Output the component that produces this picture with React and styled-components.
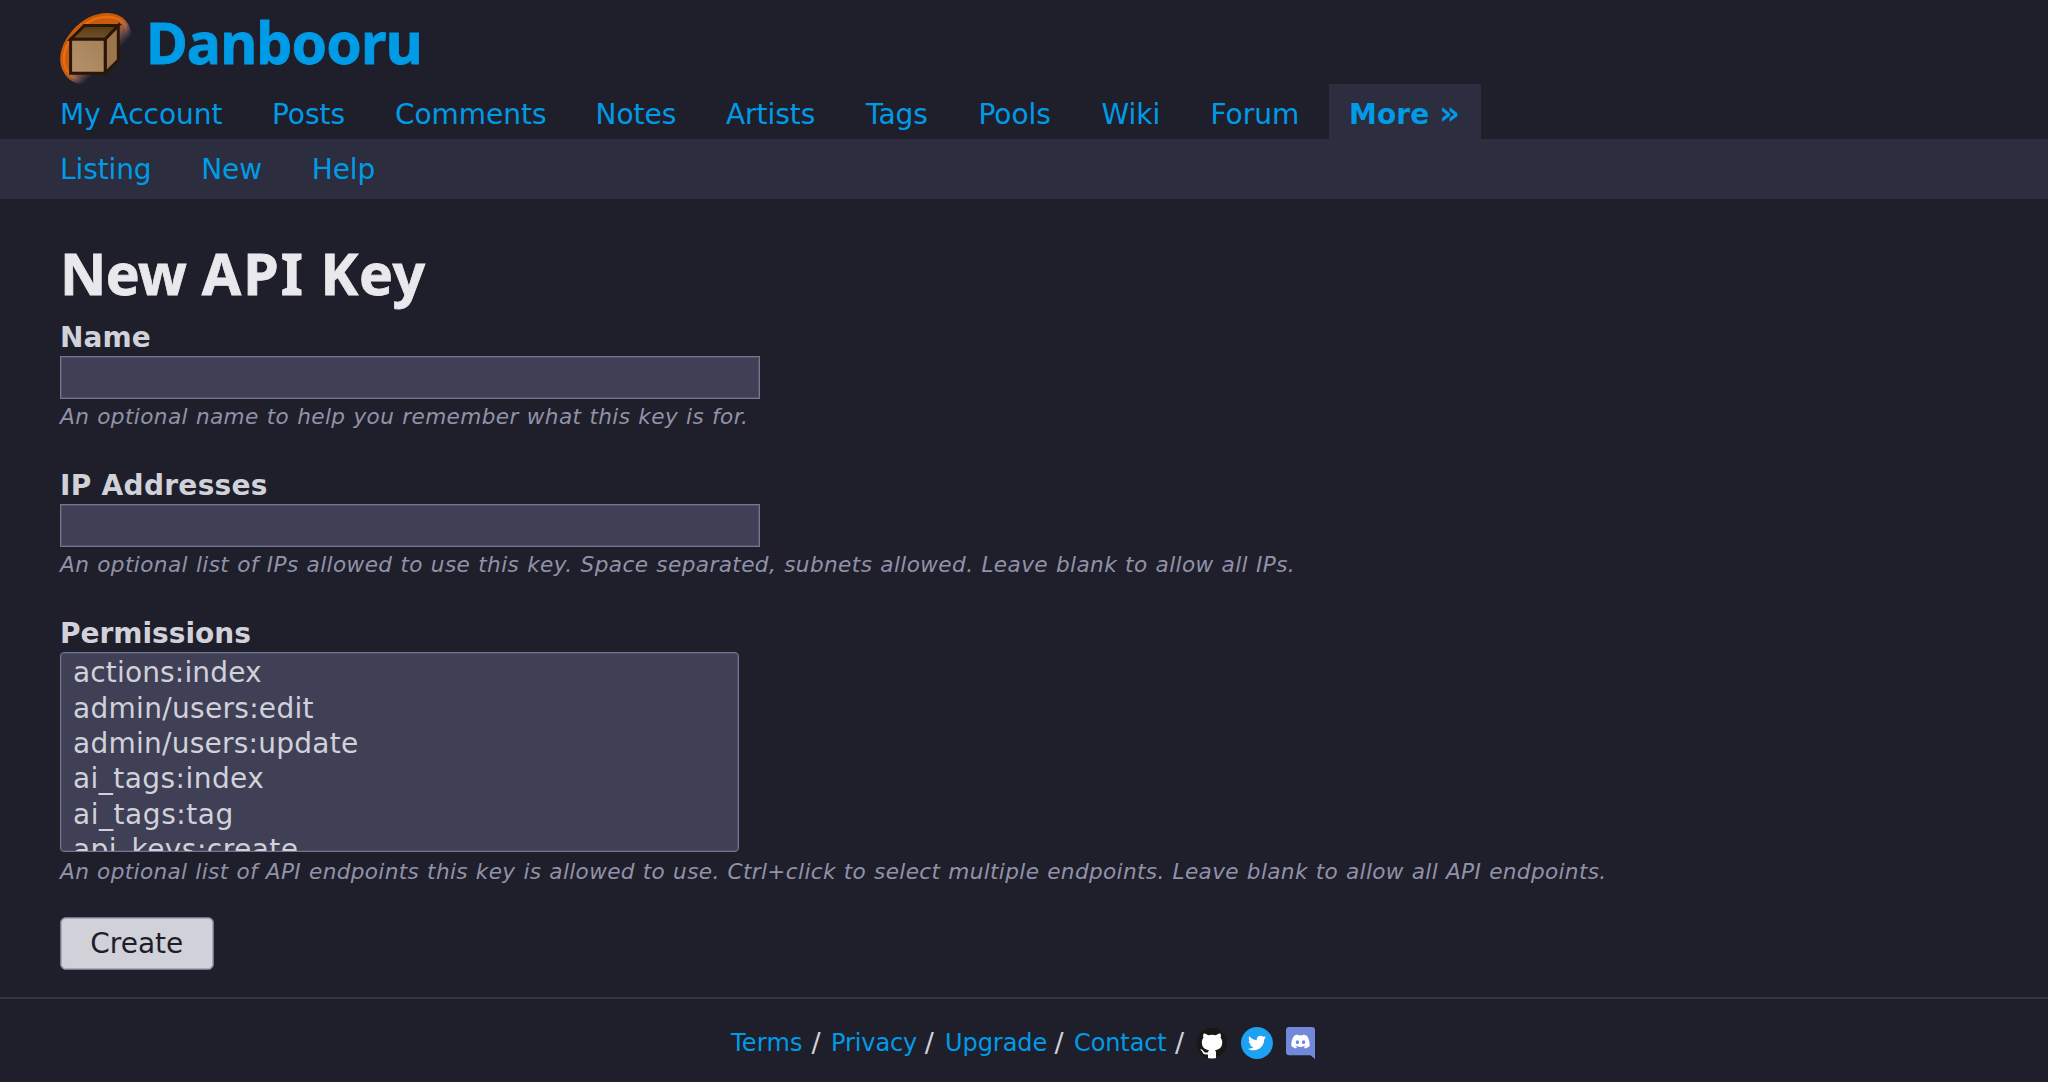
import React from "react";
import styled, { createGlobalStyle } from "styled-components";
import { FaTwitter, FaDiscord } from "react-icons/fa";

const GlobalStyle = createGlobalStyle`
  *, *::before, *::after { box-sizing: border-box; }
  html, body { margin: 0; padding: 0; background: #1f1f2c; }
  body {
    color: #d1d1da;
    font: 28px/36px Verdana, "DejaVu Sans", sans-serif;
    overflow: hidden;
  }
`;

const Page = styled.div`
  display: flex;
  flex-direction: column;
  height: 1082px;
`;

const Link = styled.a`
  color: #009be6;
  text-decoration: none;
  cursor: pointer;
`;

const Brand = styled(Link)`
  display: flex;
  height: 84px;
  padding: 13px 0 0 60px;
  gap: 14px;
`;

const BrandName = styled.span`
  margin-top: -3px;
  font: bold 57px/64px Tahoma, "Noto Sans", sans-serif;
  letter-spacing: -0.85px;
  -webkit-text-stroke: 0.8px currentColor;
`;

const MainMenu = styled.nav`
  display: flex;
  height: 55px;
  padding-left: 40px;
`;

const MenuItem = styled(Link)`
  flex: 0 0 ${(p) => p.$width}px;
  padding: 13px 0 0 20px;
  white-space: nowrap;
  letter-spacing: ${(p) => (p.$current ? 0.1 : -0.03)}px;
  font-weight: ${(p) => (p.$current ? "bold" : "normal")};
  background: ${(p) => (p.$current ? "#2c2d3f" : "transparent")};
`;

const Chevrons = styled.span`
  font-size: 32px;
  line-height: 0;
`;

const SubMenu = styled.nav`
  display: flex;
  gap: 49.7px;
  height: 60px;
  padding: 13px 60px 0;
  background: #2c2d3f;
  letter-spacing: -0.1px;
`;

const Main = styled.main`
  display: flex;
  flex-direction: column;
  align-items: flex-start;
  height: 798px;
  padding: 40px 60px 0;
`;

const Title = styled.h1`
  height: 79px;
  margin: 0;
  padding-top: 2px;
  color: #e8e8ed;
  font: bold 57px/64px Tahoma, "Noto Sans", sans-serif;
  letter-spacing: 0.8px;
  -webkit-text-stroke: 0.8px currentColor;
`;

const Word = styled.span`
  letter-spacing: ${(p) => p.$tracking}px;
`;

const Field = styled.div`
  display: flex;
  flex-direction: column;
  align-items: flex-start;
  height: ${(p) => p.$height}px;
`;

const Label = styled.label`
  height: 38px;
  padding-top: 2px;
  font-weight: bold;
  letter-spacing: ${(p) => p.$tracking || 0}px;
`;

const TextInput = styled.input`
  width: 700px;
  height: 43px;
  border: 1px solid #75758e;
  box-shadow: inset 0 0 0 1px #52526b;
  background: #3f3f56;
  color: #d1d1da;
  font: inherit;
  padding: 0 12px;
  outline: none;
`;

const Hint = styled.p`
  margin: ${(p) => p.$gap || 4}px 0 0;
  color: #9192a7;
  font-size: 21.6px;
  line-height: 28px;
  font-style: italic;
  white-space: nowrap;
  word-spacing: 0.7px;
  letter-spacing: ${(p) => p.$tracking}px;
`;

const ListBox = styled.ul`
  width: 679px;
  height: 200px;
  margin: 0;
  padding: 2.4px 0 0 12px;
  overflow: hidden;
  list-style: none;
  border: 1px solid #75758e;
  border-radius: 4px;
  box-shadow: inset 0 0 0 1px #4c4c64;
  background: #3f3f56;
`;

const Option = styled.li`
  height: 35.3px;
  line-height: 35.3px;
  letter-spacing: ${(p) => p.$tracking}px;
`;

const SubmitButton = styled.button`
  width: 153.5px;
  height: 52.5px;
  padding: 1px 0 0;
  border: 1px solid #75758e;
  border-radius: 6px;
  box-shadow: inset 0 0 0 1px #aaa9b8;
  background: #d1d1da;
  color: #1e1e2c;
  font: inherit;
`;

const Footer = styled.footer`
  display: flex;
  align-items: flex-start;
  height: 85px;
  padding: 28px 0 0 731px;
  border-top: 2px solid #33334a;
  font-size: 24px;
  line-height: 32px;
`;

const FooterLink = styled(Link)`
  flex: 0 0 ${(p) => p.$width}px;
  letter-spacing: ${(p) => p.$tracking}px;
`;

const Slash = styled.span`
  flex: 0 0 ${(p) => p.$width}px;
  font-size: 27px;
`;

const Socials = styled.div`
  display: flex;
  gap: 13px;
`;

const Badge = styled.span`
  display: flex;
  align-items: center;
  justify-content: center;
  width: 32px;
  height: 32px;
  border-radius: 50%;
  background: ${(p) => p.$color};
  color: #fff;
`;

const Logo = () => (
  <svg width="72" height="72" viewBox="0 0 72 72">
    <defs>
      <linearGradient id="glow" gradientUnits="userSpaceOnUse" x1="10" y1="10" x2="62" y2="62">
        <stop offset="0" stopColor="#c85a06" />
        <stop offset="0.44" stopColor="#c45c12" />
        <stop offset="0.56" stopColor="#a3644c" stopOpacity="0.85" />
        <stop offset="0.72" stopColor="#80687a" stopOpacity="0" />
      </linearGradient>
      <linearGradient id="ring" gradientUnits="userSpaceOnUse" x1="10" y1="10" x2="62" y2="62">
        <stop offset="0" stopColor="#f26c05" />
        <stop offset="0.42" stopColor="#ea6a0c" />
        <stop offset="0.66" stopColor="#c08070" stopOpacity="0" />
      </linearGradient>
      <linearGradient id="front" x1="1" y1="0" x2="0" y2="1">
        <stop offset="0" stopColor="#a48058" />
        <stop offset="1" stopColor="#b5926b" />
      </linearGradient>
      <linearGradient id="lid" x1="0" y1="0" x2="0" y2="1">
        <stop offset="0" stopColor="#573a16" />
        <stop offset="1" stopColor="#745129" />
      </linearGradient>
    </defs>
    <path d="M47 0C57 0 64 4 68 11C74 21 70 31 61 43C52 57 38 71 23 71C14 71 7 66 3 58C-3 46 1 31 12 18C22 6 35 0 47 0Z" fill="url(#glow)" />
    <path d="M47 4C56 4 61 6 65 12C69 21 66 30 58 41C49 54 37 67 24 67C16 67 10 63 6 56C1 45 5 32 15 21C24 10 36 4 47 4Z" fill="none" stroke="url(#ring)" strokeWidth="2.6" />
    <g stroke="#2b1505" strokeWidth="3" strokeLinejoin="miter">
      <path d="M10.6 26.2L24.2 12.6H58.3L45.2 26.2Z" fill="url(#lid)" />
      <path d="M45.2 26.2L58.3 12.6V47L45.2 60.2Z" fill="#9a764e" />
      <path d="M10.6 26.2H45.2V60.2H10.6Z" fill="url(#front)" />
    </g>
  </svg>
);

const GithubIcon = () => (
  <svg width="32" height="32" viewBox="0 0 16 16">
    <circle cx="8" cy="8" r="7.7" fill="#fff" />
    <path
      fill="#191717"
      d="M8 0C3.58 0 0 3.58 0 8c0 3.54 2.29 6.53 5.47 7.59.4.07.55-.17.55-.38 0-.19-.01-.82-.01-1.49-2.01.37-2.53-.49-2.69-.94-.09-.23-.48-.94-.82-1.13-.28-.15-.68-.52-.01-.53.63-.01 1.08.58 1.23.82.72 1.21 1.87.87 2.33.66.07-.52.28-.87.51-1.07-1.78-.2-3.64-.89-3.64-3.95 0-.87.31-1.59.82-2.15-.08-.2-.36-1.02.08-2.12 0 0 .67-.21 2.2.82.64-.18 1.32-.27 2-.27.68 0 1.36.09 2 .27 1.53-1.04 2.2-.82 2.2-.82.44 1.1.16 1.92.08 2.12.51.56.82 1.27.82 2.15 0 3.07-1.87 3.75-3.65 3.95.29.25.54.73.54 1.48 0 1.07-.01 1.93-.01 2.2 0 .21.15.46.55.38A8.013 8.013 0 0 0 16 8c0-4.42-3.58-8-8-8z"
    />
  </svg>
);

const DiscordIcon = () => (
  <svg width="29" height="32" viewBox="0 0 29 32">
    <path d="M3.3 0H25.7A3.3 3.3 0 0 1 29 3.3V32L24.6 28.3H3.3A3.3 3.3 0 0 1 0 25V3.3A3.3 3.3 0 0 1 3.3 0Z" fill="#7289da" />
    <FaDiscord x="4.5" y="4.5" width="20" height="20" size={20} color="#fff" />
  </svg>
);

const MENU = [
  ["My Account", 212],
  ["Posts", 123],
  ["Comments", 200.5],
  ["Notes", 130.5],
  ["Artists", 140],
  ["Tags", 112.5],
  ["Pools", 123],
  ["Wiki", 109],
  ["Forum", 138.5],
];

const PERMISSIONS = [
  ["actions:index", 0.15],
  ["admin/users:edit", 0.3],
  ["admin/users:update", 0.25],
  ["ai_tags:index", 0.45],
  ["ai_tags:tag", 0.55],
  ["api_keys:create", 0.45],
];

const FOOTER_LINKS = [
  { name: "Terms", width: 80.5, gap: 19.5, tracking: 0.2 },
  { name: "Privacy", width: 93.7, gap: 20.3, tracking: -0.1 },
  { name: "Upgrade", width: 109.5, gap: 19.5, tracking: -0.05 },
  { name: "Contact", width: 101, gap: 20.6, tracking: -0.1 },
];

export default function App() {
  return (
    <Page>
      <GlobalStyle />
      <header>
        <Brand>
          <Logo />
          <BrandName>Danbooru</BrandName>
        </Brand>
        <MainMenu>
          {MENU.map(([name, width]) => (
            <MenuItem key={name} $width={width}>{name}</MenuItem>
          ))}
          <MenuItem $width={152} $current>More <Chevrons>»</Chevrons></MenuItem>
        </MainMenu>
        <SubMenu>
          <Link>Listing</Link>
          <Link>New</Link>
          <Link>Help</Link>
        </SubMenu>
      </header>
      <Main>
        <Title>
          <Word $tracking={-0.6}>New</Word> <Word $tracking={2}>API</Word> <Word $tracking={0.6}>Key</Word>
        </Title>
        <Field $height={148}>
          <Label htmlFor="name" $tracking={0.1}>Name</Label>
          <TextInput id="name" />
          <Hint $tracking={0.4}>An optional name to help you remember what this key is for.</Hint>
        </Field>
        <Field $height={148}>
          <Label htmlFor="ips" $tracking={0.3}>IP Addresses</Label>
          <TextInput id="ips" />
          <Hint $tracking={0.4}>
            An optional list of IPs allowed to use this key. Space separated, subnets allowed. Leave blank to allow all IPs.
          </Hint>
        </Field>
        <Field $height={303}>
          <Label>Permissions</Label>
          <ListBox>
            {PERMISSIONS.map(([name, tracking]) => (
              <Option key={name} $tracking={tracking}>{name}</Option>
            ))}
          </ListBox>
          <Hint $tracking={0.355} $gap={6}>
            An optional list of API endpoints this key is allowed to use. Ctrl+click to select multiple endpoints. Leave blank to allow all API endpoints.
          </Hint>
        </Field>
        <SubmitButton type="button">Create</SubmitButton>
      </Main>
      <Footer>
        {FOOTER_LINKS.map(({ name, width, gap, tracking }) => (
          <React.Fragment key={name}>
            <FooterLink $width={width} $tracking={tracking}>{name}</FooterLink>
            <Slash $width={gap}>/</Slash>
          </React.Fragment>
        ))}
        <Socials>
          <GithubIcon />
          <Badge $color="#1da1f2"><FaTwitter size={18} /></Badge>
          <DiscordIcon />
        </Socials>
      </Footer>
    </Page>
  );
}
